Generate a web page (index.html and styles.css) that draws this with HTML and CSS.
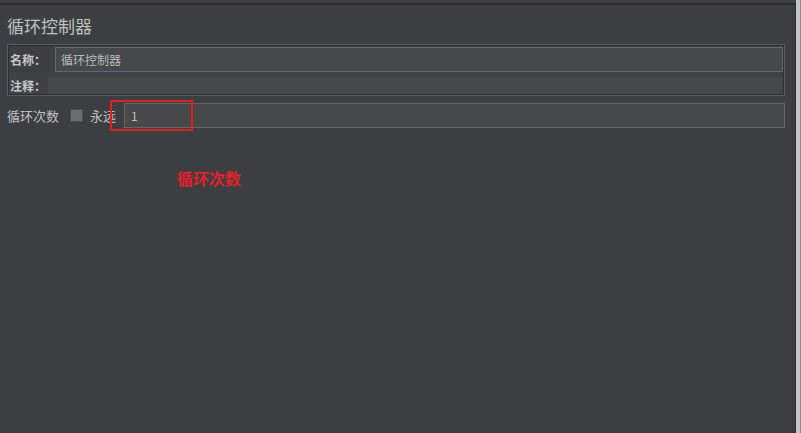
FILE: index.html
```html
<!DOCTYPE html>
<html lang="zh-CN">
<head>
<meta charset="utf-8">
<title>循环控制器</title>
<link rel="stylesheet" href="styles.css">
</head>
<body>
<div class="window">
  <div class="main">
    <div class="content">
      <div class="title">循环控制器</div>
      <div class="panel">
        <div class="row row-name">
          <span class="label label-name">名称：</span>
          <div class="field">循环控制器</div>
        </div>
        <div class="row row-comment">
          <span class="label label-comment">注释：</span>
          <div class="field field-flat"></div>
        </div>
      </div>
      <div class="loop-row">
        <span class="loop-label">循环次数</span>
        <span class="checkbox"></span>
        <span class="forever">永远</span>
        <div class="field field-loop">1</div>
        <div class="highlight"></div>
      </div>
      <div class="note">循环次数</div>
    </div>
  </div>
  <div class="scroll"></div>
</div>
</body>
</html>
```

FILE: styles.css
```css
html, body {
  margin: 0;
  padding: 0;
}
body {
  width: 801px;
  height: 433px;
  overflow: hidden;
  background: #3c3f41;
  font-family: "Noto Sans CJK SC", "Noto Sans", sans-serif;
  color: #bbbbbb;
}
.window {
  display: flex;
  height: 433px;
}
.main {
  flex: 1;
  padding-top: 3px;
  display: flex;
  flex-direction: column;
}
.content {
  flex: 1;
  border-top: 2px solid #2b2d2e;
  border-right: 1px solid #2b2d2e;
  padding: 0 10px 0 7px;
  position: relative;
}
.scroll {
  width: 5px;
  background: linear-gradient(to right, #c4c4c4 0, #c4c4c4 4px, #8c8c8c 4px);
}
.title {
  margin-top: 11px;
  font-size: 17px;
  line-height: 20px;
  height: 20px;
  color: #c0c0c0;
}
.panel {
  margin-top: 8px;
  height: 52px;
  box-sizing: border-box;
  border: 1px solid #595c5e;
  box-shadow: inset 0 0 0 1px #2c2e30;
  padding: 1px;
}
.row {
  display: flex;
  align-items: stretch;
}
.row-name {
  margin-top: 1px;
  height: 25px;
}
.row-comment {
  height: 22px;
  background: #3f4244;
}
.label {
  font-size: 12px;
  font-weight: bold;
  color: #c8c8c8;
  padding-left: 1px;
  display: flex;
  align-items: center;
  box-sizing: border-box;
}
.label-name {
  width: 46px;
}
.label-comment {
  width: 39px;
  padding-top: 4px;
}
.field {
  flex: 1;
  box-sizing: border-box;
  border: 1px solid #646768;
  background: #45494a;
  font-size: 12px;
  color: #bbbbbb;
  padding-left: 5px;
  display: flex;
  align-items: center;
}
.field-flat {
  border: none;
  margin-top: 5px;
}
.loop-row {
  margin-top: 7px;
  height: 25px;
  display: flex;
  align-items: center;
  position: relative;
}
.loop-label {
  font-size: 13px;
  color: #c0c0c0;
  width: 63px;
}
.checkbox {
  width: 11px;
  height: 11px;
  border: 1px solid #4a4d4f;
  background: #6b6d6e;
  margin-right: 7px;
}
.forever {
  font-size: 13px;
  color: #c0c0c0;
  width: 34px;
}
.field-loop {
  height: 25px;
  color: #b7c3a6;
  padding-left: 6px;
  font-size: 12px;
}
.highlight {
  position: absolute;
  left: 103px;
  top: -3px;
  width: 83px;
  height: 31px;
  box-sizing: border-box;
  border: 2px solid #e31c1c;
}
.note {
  margin-top: 40px;
  margin-left: 170px;
  font-size: 16px;
  line-height: 20px;
  font-weight: bold;
  color: #e5202a;
}
```
